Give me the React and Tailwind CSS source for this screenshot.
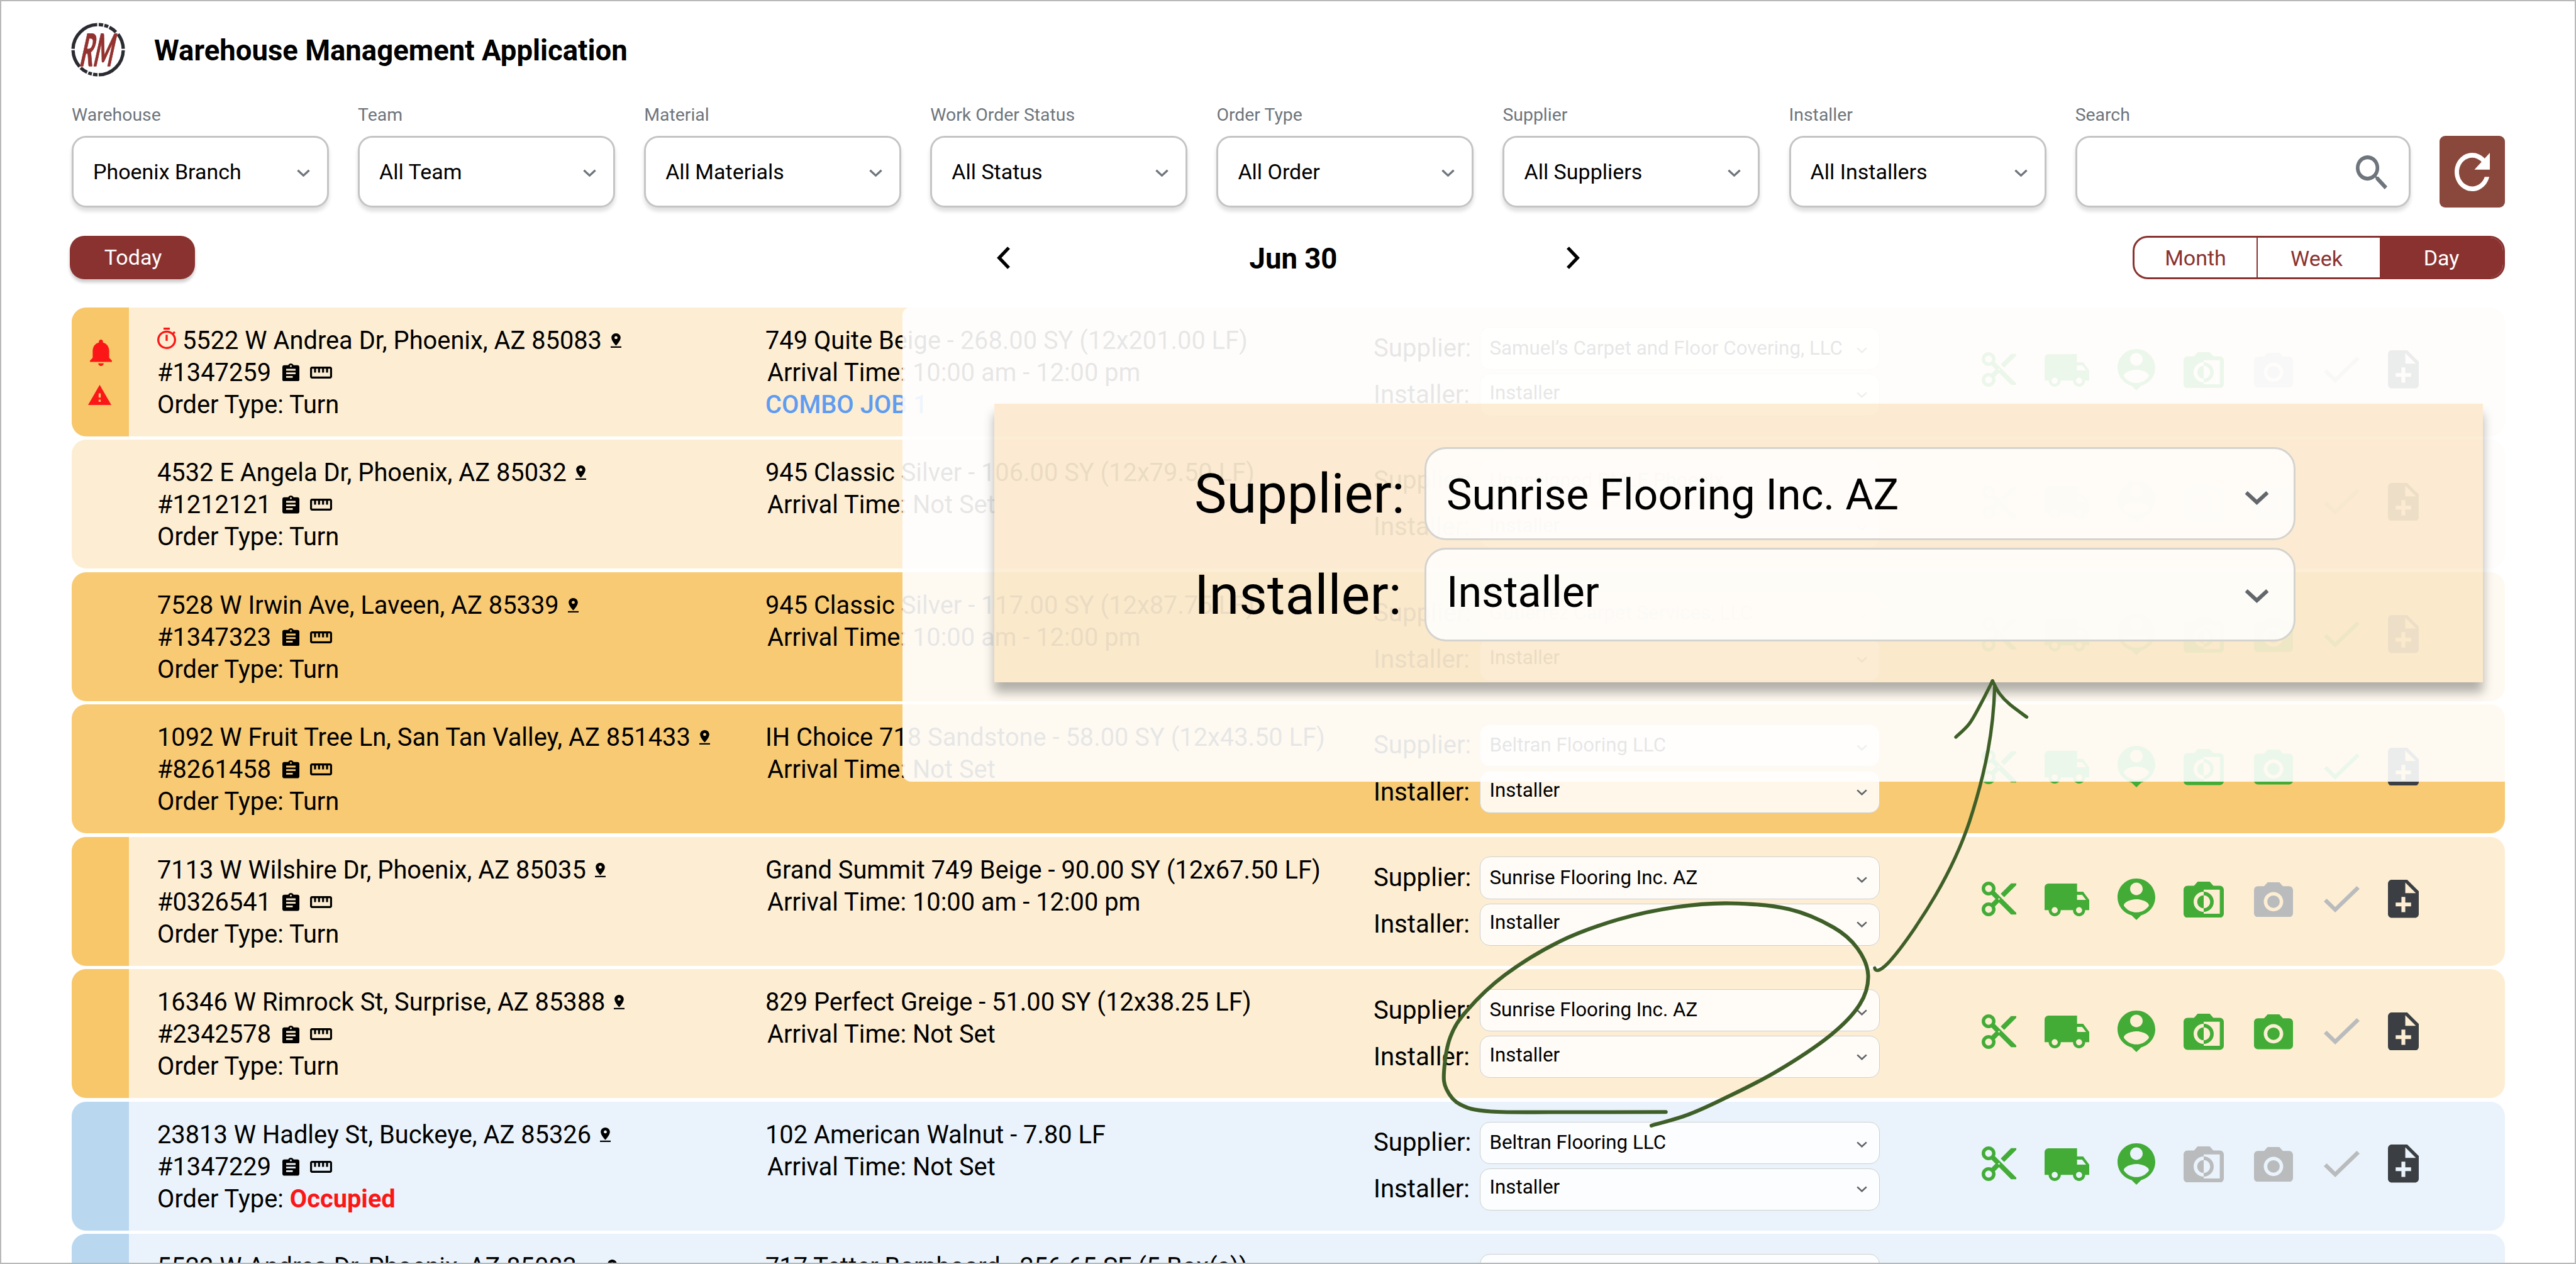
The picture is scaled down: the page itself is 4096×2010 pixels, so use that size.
import React from "react";

/* Icon shapes: [viewBox cropped to the drawing, path] */
const SHAPES = {
  cut: ["2 2 20 20", "M9.64 7.64c.23-.5.36-1.05.36-1.64 0-2.21-1.79-4-4-4S2 3.79 2 6s1.79 4 4 4c.59 0 1.14-.13 1.64-.36L10 12l-2.36 2.36C7.14 14.13 6.59 14 6 14c-2.21 0-4 1.79-4 4s1.79 4 4 4 4-1.79 4-4c0-.59-.13-1.14-.36-1.64L12 14l7 7h3v-1L9.64 7.64zM6 8c-1.1 0-2-.89-2-2s.9-2 2-2 2 .89 2 2-.9 2-2 2zm0 12c-1.1 0-2-.89-2-2s.9-2 2-2 2 .89 2 2-.9 2-2 2zm6-7.5c-.28 0-.5-.22-.5-.5s.22-.5.5-.5.5.22.5.5-.22.5-.5.5zM19 3l-6 6 2 2 7-7V3z"],
  truck: ["1 4 22 16", "M20 8h-3V4H3c-1.1 0-2 .9-2 2v11h2c0 1.66 1.34 3 3 3s3-1.34 3-3h6c0 1.66 1.34 3 3 3s3-1.34 3-3h2v-5l-3-4zM6 18.5c-.83 0-1.5-.67-1.5-1.5s.67-1.5 1.5-1.5 1.5.67 1.5 1.5-.67 1.5-1.5 1.5zm13.5-9l1.96 2.5H17V9.5h2.5zm-1.5 9c-.83 0-1.5-.67-1.5-1.5s.67-1.5 1.5-1.5 1.5.67 1.5 1.5-.67 1.5-1.5 1.5z"],
  person: ["3 2 18 20", "M12 2c-4.97 0-9 4.03-9 9 0 4.17 2.84 7.67 6.69 8.69L12 22l2.31-2.31C18.16 18.67 21 15.17 21 11c0-4.97-4.03-9-9-9zm0 2c1.66 0 3 1.34 3 3s-1.34 3-3 3-3-1.34-3-3 1.34-3 3-3zm0 14.3c-2.5 0-4.71-1.28-6-3.22.03-1.99 4-3.08 6-3.08 1.99 0 5.97 1.09 6 3.08-1.29 1.94-3.5 3.22-6 3.22z"],
  mono: ["2 3 20 18", "M20 5h-3.2L15 3H9L7.2 5H4c-1.1 0-2 .9-2 2v12c0 1.1.9 2 2 2h16c1.1 0 2-.9 2-2V7c0-1.1-.9-2-2-2zm0 14h-8v-1c-2.8 0-5-2.2-5-5s2.2-5 5-5V7h8v12zm-3-6c0-2.8-2.2-5-5-5v1.8c1.8 0 3.2 1.4 3.2 3.2s-1.4 3.2-3.2 3.2V18c2.8 0 5-2.2 5-5zm-8.2 0c0 1.8 1.4 3.2 3.2 3.2V9.8c-1.8 0-3.2 1.4-3.2 3.2z"],
  camera: ["2 2 20 18", "M9 2L7.17 4H4c-1.1 0-2 .9-2 2v12c0 1.1.9 2 2 2h16c1.1 0 2-.9 2-2V6c0-1.1-.9-2-2-2h-3.17L15 2H9zm3 15c-2.76 0-5-2.24-5-5s2.24-5 5-5 5 2.24 5 5-2.24 5-5 5zM12 8.8a3.2 3.2 0 1 0 0 6.4 3.2 3.2 0 1 0 0-6.4z"],
  check: ["3.41 5.59 17.59 13.41", "M9 16.17L4.83 12l-1.42 1.41L9 19 21 7l-1.41-1.41z"],
  note: ["4 2 16 20", "M14 2H6c-1.1 0-1.99.9-1.99 2L4 20c0 1.1.89 2 1.99 2H18c1.1 0 2-.9 2-2V8l-6-6zm2 14h-3v3h-2v-3H8v-2h3v-3h2v3h3v2zm-3-7V3.5L18.5 9H13z"],
  pin: ["5 2 14 20", "M18 8c0-3.31-2.69-6-6-6S6 4.69 6 8c0 4.5 6 11 6 11s6-6.5 6-11zm-8 0c0-1.1.9-2 2-2s2 .9 2 2-.89 2-2 2c-1.1 0-2-.9-2-2zM5 20v2h14v-2H5z"],
  clipboard: ["3 1 18 20", "M19 3h-4.18C14.4 1.84 13.3 1 12 1c-1.3 0-2.4.84-2.82 2H5c-1.1 0-2 .9-2 2v14c0 1.1.9 2 2 2h14c1.1 0 2-.9 2-2V5c0-1.1-.9-2-2-2zm-7 0c.55 0 1 .45 1 1s-.45 1-1 1-1-.45-1-1 .45-1 1-1zm2 14H7v-2h7v2zm3-4H7v-2h10v2zm0-4H7V7h10v2z"],
  ruler: ["1 6 22 12", "M21 6H3c-1.1 0-2 .9-2 2v8c0 1.1.9 2 2 2h18c1.1 0 2-.9 2-2V8c0-1.1-.9-2-2-2zm0 10H3V8h2v4h2V8h2v4h2V8h2v4h2V8h2v4h2V8h2v8z"],
  bell: ["4 2.5 16 19.5", "M12 22c1.1 0 2-.9 2-2h-4c0 1.1.89 2 2 2zm6-6v-5c0-3.07-1.64-5.64-4.5-6.32V4c0-.83-.67-1.5-1.5-1.5s-1.5.67-1.5 1.5v.68C7.63 5.36 6 7.92 6 11v5l-2 2v1h16v-1l-2-2z"],
  warning: ["1 2 22 19", "M1 21h22L12 2 1 21zm12-3h-2v-2h2v2zm0-4h-2v-4h2v4z"],
  timer: ["3 1 18 21", "M15 1H9v2h6V1zm-4 13h2V8h-2v6zm8.03-6.61l1.42-1.42c-.43-.51-.9-.99-1.41-1.41l-1.42 1.42C16.07 4.74 14.12 4 12 4c-4.97 0-9 4.03-9 9s4.02 9 9 9 9-4.03 9-9c0-2.12-.74-4.07-1.97-5.61zM12 20c-3.87 0-7-3.13-7-7s3.13-7 7-7 7 3.13 7 7-3.13 7-7 7z"],
  search: ["3 3 17.49 17.49", "M15.5 14h-.79l-.28-.27C15.41 12.59 16 11.11 16 9.5 16 5.91 13.09 3 9.5 3S3 5.91 3 9.5 5.91 16 9.5 16c1.61 0 3.09-.59 4.23-1.57l.27.28v.79l5 4.99L20.49 19l-4.99-5zm-6 0C7.01 14 5 11.99 5 9.5S7.01 5 9.5 5 14 7.01 14 9.5 11.99 14 9.5 14z"],
  refresh: ["4 4 16 16", "M17.65 6.35C16.2 4.9 14.21 4 12 4c-4.42 0-7.99 3.58-7.99 8s3.57 8 7.99 8c3.73 0 6.84-2.55 7.73-6h-2.08c-.82 2.33-3.04 4-5.65 4-3.31 0-6-2.69-6-6s2.69-6 6-6c1.66 0 3.14.69 4.22 1.78L13 11h7V4l-2.35 2.35z"],
};

function Icon({ name, className }) {
  const [box, d] = SHAPES[name];
  return (
    <svg viewBox={box} preserveAspectRatio="none" fill="currentColor" className={"shrink-0 " + className}>
      <path d={d} />
    </svg>
  );
}

function Chevron({ className }) {
  return (
    <svg viewBox="0 0 22 13" fill="none" stroke="currentColor" strokeWidth="3.4" className={"shrink-0 " + className}>
      <path d="M1.5 1.8 11 10.6 20.5 1.8" />
    </svg>
  );
}

function Logo() {
  return (
    <svg viewBox="0 0 91 91" className="w-[86px] h-[86px] shrink-0">
      <g fill="none" stroke="#2b2c31" strokeWidth="5.6">
        <path d="M44 3.3A42.2 42.2 0 0 0 3.3 44" />
        <path d="M3.3 46.5A42.2 42.2 0 0 0 14.5 74" />
        <path d="M16.2 76A42.2 42.2 0 0 0 27 83.5" />
        <path d="M29 84.5A42.2 42.2 0 0 0 35 86.4" />
        <path d="M37 87A42.2 42.2 0 0 0 44.5 87.8" />
        <path d="M46.5 87.8A42.2 42.2 0 0 0 87.8 46.5" />
        <path d="M87.8 44A42.2 42.2 0 0 0 79 19.5" />
        <path d="M75.5 16A42.2 42.2 0 0 0 64.5 7.8" />
        <path d="M62.5 6.8A42.2 42.2 0 0 0 56 4.6" />
        <path d="M54 4A42.2 42.2 0 0 0 46.5 3.3" />
      </g>
      <text
        transform="translate(14 72.5) skewX(-9)"
        fill="#93322f"
        stroke="#93322f"
        strokeWidth="1.4"
        strokeLinejoin="round"
        fontFamily="Lato, 'Open Sans', sans-serif"
        fontStyle="italic"
        fontWeight="700"
        fontSize="75"
        textLength="56"
        lengthAdjust="spacingAndGlyphs"
      >
        RM
      </text>
    </svg>
  );
}

const FILTERS = [
  ["Warehouse", "Phoenix Branch"],
  ["Team", "All Team"],
  ["Material", "All Materials"],
  ["Work Order Status", "All Status"],
  ["Order Type", "All Order"],
  ["Supplier", "All Suppliers"],
  ["Installer", "All Installers"],
];

const FIELD = "flex h-[114px] items-center justify-between rounded-[23px] border-[3px] border-[#c4c4c4] bg-white shadow-[0_6px_6px_rgba(0,0,0,0.13)]";

function Filters() {
  return (
    <div className="mt-[41px] ml-[112px] flex gap-[46.1px]">
      {FILTERS.map(([label, value]) => (
        <div key={label} className="w-[409px]">
          <div className="h-10 text-[28.4px] leading-10 text-[#6e757c]">{label}</div>
          <div className={FIELD + " mt-[13px] pl-[31px] pr-[27px]"}>
            <span className="text-[34px]">{value}</span>
            <Chevron className="mt-1 w-[21px] text-[#6e757c]" />
          </div>
        </div>
      ))}
      <div className="w-[533px]">
        <div className="h-10 text-[28.4px] leading-10 text-[#6e757c]">Search</div>
        <div className={FIELD + " mt-[13px] pr-[34px]"}>
          <span />
          <Icon name="search" className="mt-[2px] h-[54px] w-[50px] text-[#6e757c]" />
        </div>
      </div>
      <div className="mt-[53px] flex h-[114px] w-[104px] items-center justify-center rounded-[9px] bg-[#8a483c]">
        <Icon name="refresh" className="h-[61px] w-[56px] text-white" />
      </div>
    </div>
  );
}

function Toolbar() {
  return (
    <div className="mt-[45px] ml-[109px] flex h-[69px] w-[3872px] items-center text-[34px]">
      <div className="flex h-[69px] w-[199px] items-center justify-center rounded-[23px] bg-[#8a3230] text-white shadow-[0_5px_5px_rgba(0,0,0,0.2)]">
        <span className="mt-[-1px] ml-[2px]">Today</span>
      </div>
      <div className="ml-[1275px] flex w-[927px] items-center justify-between">
        <svg viewBox="0 0 21 36" className="h-[36px] w-[21px]" fill="none" stroke="black" strokeWidth="5.4">
          <path d="M19 2 3.8 18 19 34" />
        </svg>
        <span className="pl-4 pt-1 text-[45.5px] leading-none font-bold">Jun 30</span>
        <svg viewBox="0 0 21 36" className="h-[36px] w-[21px]" fill="none" stroke="black" strokeWidth="5.4">
          <path d="M2 2 17.2 18 2 34" />
        </svg>
      </div>
      <div className="ml-auto flex h-[69px] w-[592px] overflow-hidden rounded-[24px] border-[3px] border-[#8a3230] text-[#8a3230]">
        <div className="flex w-[196px] items-center justify-center border-r-2 border-[#8a3230] pt-[1px]">Month</div>
        <div className="flex w-[194px] items-center justify-center pt-[3px] pr-[7px]">Week</div>
        <div className="flex grow items-center justify-center bg-[#8a3230] pt-[1px] text-white">Day</div>
      </div>
    </div>
  );
}

const THEMES = {
  light: "bg-[#fdeed3]",
  solid: "bg-[#f8ca73]",
  blue: "bg-[#eaf3fb]",
};
const STRIPS = {
  amber: "bg-[#f7c76a]",
  sky: "bg-[#b9d8f0]",
  none: "",
};

const G = "text-[#42ac37]";
const X = "text-[#b9bbbd]";

const ROWS = [
  { theme: "light", strip: "amber", alerts: true, timer: true, address: "5522 W Andrea Dr, Phoenix, AZ 85083", number: "#1347259", material: "749 Quite Beige - 268.00 SY (12x201.00 LF)", arrival: "10:00 am - 12:00 pm", combo: "COMBO JOB 1", supplier: "Samuel’s Carpet and Floor Covering, LLC", marks: [G, X, X] },
  { theme: "light", strip: "none", address: "4532 E Angela Dr, Phoenix, AZ 85032", number: "#1212121", material: "945 Classic Silver - 106.00 SY (12x79.50 LF)", arrival: "Not Set", supplier: "Unassigned PMLF Phoenix", marks: [X, X, X] },
  { theme: "solid", strip: "none", address: "7528 W Irwin Ave, Laveen, AZ 85339", number: "#1347323", material: "945 Classic Silver - 117.00 SY (12x87.75 LF)", arrival: "10:00 am - 12:00 pm", supplier: "Gutierrez Carpet Services, LLC", marks: [G, G, G] },
  { theme: "solid", strip: "none", address: "1092 W Fruit Tree Ln, San Tan Valley, AZ 851433", number: "#8261458", material: "IH Choice 718 Sandstone - 58.00 SY (12x43.50 LF)", arrival: "Not Set", supplier: "Beltran Flooring LLC", marks: [G, G, G] },
  { theme: "light", strip: "amber", address: "7113 W Wilshire Dr, Phoenix, AZ 85035", number: "#0326541", material: "Grand Summit 749 Beige - 90.00 SY (12x67.50 LF)", arrival: "10:00 am - 12:00 pm", supplier: "Sunrise Flooring Inc. AZ", marks: [G, X, X] },
  { theme: "light", strip: "amber", address: "16346 W Rimrock St, Surprise, AZ 85388", number: "#2342578", material: "829 Perfect Greige - 51.00 SY (12x38.25 LF)", arrival: "Not Set", supplier: "Sunrise Flooring Inc. AZ", marks: [G, G, X] },
  { theme: "blue", strip: "sky", occupied: true, address: "23813 W Hadley St, Buckeye, AZ 85326", number: "#1347229", material: "102 American Walnut - 7.80 LF", arrival: "Not Set", supplier: "Beltran Flooring LLC", marks: [X, X, X] },
  { theme: "blue", strip: "sky", farPin: true, address: "5522 W Andrea Dr, Phoenix, AZ 85083", number: "#1347259", material: "717 Tetter Barnboard - 256.65 SF (5 Box(s))", arrival: "Not Set", supplier: "", marks: [X, X, X] },
];

function Picker({ label, value, second }) {
  return (
    <div className="flex h-[67px] items-center">
      <span className="w-[168.5px] text-[40.2px]">{label}</span>
      <div className="flex h-[67.4px] w-[636.5px] items-center justify-between rounded-[16px] border-[1.5px] border-[#cfcfcf] bg-white/85 pr-[19px] pl-[15px]">
        <span className={second ? "mb-[5px] text-[31.3px]" : "text-[31.3px]"}>{value}</span>
        <Chevron className={second ? "w-[17px] text-[#5f6368]" : "mt-[6px] w-[17px] text-[#5f6368]"} />
      </div>
    </div>
  );
}

function Row({ row }) {
  return (
    <div className={"flex h-[205px] w-[3869px] shrink-0 overflow-hidden rounded-[23px] " + THEMES[row.theme]}>
      <div className={"flex w-[91px] shrink-0 flex-col items-center gap-[30.5px] pt-[51px] " + STRIPS[row.strip]}>
        {row.alerts && <Icon name="bell" className="ml-[2px] h-[42px] w-[35px] text-[#fb1717]" />}
        {row.alerts && <Icon name="warning" className="mr-[2px] h-[32px] w-[37px] text-[#fb1717]" />}
      </div>
      <div className="w-[1012px] shrink-0 pt-[27px] pl-[45px] text-[39.8px] leading-[51.1px] whitespace-nowrap">
        <div className="flex items-center">
          {row.timer && <Icon name="timer" className="mr-[10px] mb-[7px] h-[34px] w-[30px] text-[#fb1717]" />}
          <span>{row.address}</span>
          <Icon name="pin" className={row.farPin ? "ml-[48px] h-[23px] w-[17px]" : "ml-[14px] h-[23px] w-[17px]"} />
        </div>
        <div className="flex items-center">
          <span className="w-[199px]">{row.number}</span>
          <Icon name="clipboard" className="h-[28.5px] w-[27px]" />
          <Icon name="ruler" className="ml-[17px] h-[19px] w-[35px]" />
        </div>
        <div>
          Order Type:{" "}
          {row.occupied ? <span className="font-bold text-[#fb1717]">Occupied</span> : <span>Turn</span>}
        </div>
      </div>
      <div className="w-[967px] shrink-0 pt-[27px] text-[39.8px] leading-[51.1px] whitespace-nowrap">
        <div>{row.material}</div>
        <div className="pl-[3px]">Arrival Time: {row.arrival}</div>
        {row.combo && <div className="font-medium text-[#5f9cf0]">{row.combo}</div>}
      </div>
      <div className="flex w-[805px] shrink-0 flex-col gap-[7.1px] pt-[32px]">
        <Picker label="Supplier:" value={row.supplier} />
        <Picker label="Installer:" value="Installer" second />
      </div>
      <div className="ml-[161.5px] flex items-center pb-[7px]">
        <Icon name="cut" className="h-[55px] w-[55px] text-[#42ac37]" />
        <Icon name="truck" className="ml-[45px] mt-[2px] h-[52px] w-[71px] text-[#42ac37]" />
        <Icon name="person" className="ml-[45px] h-[66px] w-[60px] text-[#42ac37]" />
        <Icon name="mono" className={"ml-[45.5px] mt-[2px] h-[57.5px] w-[64px] " + row.marks[0]} />
        <Icon name="camera" className={"ml-[48px] mt-[2px] h-[55.5px] w-[62px] " + row.marks[1]} />
        <Icon name="check" className={"ml-[48.5px] h-[42px] w-[57px] " + row.marks[2]} />
        <Icon name="note" className="ml-[45px] h-[60.5px] w-[49px] text-[#3b3f43]" />
      </div>
    </div>
  );
}

function ZoomField({ label, value, second }) {
  return (
    <div className="flex h-[148.5px] items-center">
      <span className="w-[366px] pt-1 text-[86.6px] leading-none">{label}</span>
      <div className="flex h-[148.5px] w-[1385px] items-center justify-between rounded-[34px] border-[3px] border-[#d4d3cf] bg-white/85 pr-[39px] pl-[32px]">
        <span className={second ? "pb-[7px] text-[68.1px] leading-none" : "pt-[5px] text-[68.1px] leading-none"}>{value}</span>
        <Chevron className={second ? "mt-[3px] w-[39px] text-[#63676c]" : "mt-[13px] w-[39px] text-[#63676c]"} />
      </div>
    </div>
  );
}

/* Smooth curve through a list of points */
function curve(points) {
  let d = "M" + points[0].join(" ");
  for (let i = 0; i < points.length - 1; i++) {
    const a = points[i - 1] || points[i];
    const b = points[i];
    const c = points[i + 1];
    const e = points[i + 2] || c;
    d += ` C${b[0] + (c[0] - a[0]) / 6} ${b[1] + (c[1] - a[1]) / 6} ${c[0] - (e[0] - b[0]) / 6} ${c[1] - (e[1] - b[1]) / 6} ${c[0]} ${c[1]}`;
  }
  return d;
}

const LOOP = [[2791, 1863.3], [2640, 1863.5], [2498, 1862.4], [2446.5, 1850.6], [2423.5, 1825], [2419.5, 1794], [2430, 1737.6], [2458, 1693], [2521, 1634], [2613, 1577.6], [2710.5, 1541], [2808, 1520], [2900, 1513.6], [2997.6, 1523.5], [3072, 1554], [3112, 1589], [3130, 1634], [3116, 1683], [3066.5, 1735], [2974.6, 1796.5], [2883, 1843.5], [2825, 1869], [2767, 1886]];
const HEAD_LEFT = [[3277, 1235], [3299.5, 1212.7], [3319, 1179], [3338.4, 1141]];
const HEAD_RIGHT = [[3338.4, 1141], [3350, 1162], [3367, 1180], [3395.6, 1201.5]];

function Annotation() {
  return (
    <svg
      viewBox="0 0 4316 2118"
      preserveAspectRatio="none"
      className="pointer-events-none absolute top-[-2px] left-[-2px] h-[2010px] w-[4096px]"
      fill="none"
      stroke="#3f5f28"
      strokeWidth="6.4"
      strokeLinecap="round"
      strokeLinejoin="round"
    >
      <path d={curve(LOOP)} />
      <path d="M3141 1622C3143 1630 3152 1626 3166 1611C3190 1584 3222 1536 3243 1500C3272 1450 3290 1406 3300 1376C3328 1290 3340 1222 3342 1151" strokeWidth="5.6" />
      <path d={curve(HEAD_LEFT)} strokeWidth="5.6" />
      <path d={curve(HEAD_RIGHT)} strokeWidth="5.6" />
    </svg>
  );
}

export default function App() {
  return (
    <div className="relative flex h-[2010px] w-[4096px] flex-col overflow-hidden border-2 border-[#b9b9b9] bg-white font-['Roboto',sans-serif] text-black">
      <header className="mt-[34px] ml-[111px] flex h-[86px] shrink-0 items-center gap-[46px]">
        <Logo />
        <h1 className="pt-[3px] text-[45.5px] leading-none font-bold">Warehouse Management Application</h1>
      </header>
      <Filters />
      <Toolbar />
      <main className="mt-[44.5px] ml-[112px] flex flex-col gap-[5.54px]">
        {ROWS.map((row) => (
          <Row key={row.number + row.material} row={row} />
        ))}
      </main>

      <div className="absolute top-[486px] left-[1433px] h-[755px] w-[2659px] rounded-[14px] bg-white/90" />

      <section className="absolute top-[640px] left-[1579px] flex h-[443px] w-[2367px] flex-col gap-[12.3px] bg-[#f5bf68]/28 pt-[68.5px] pl-[318px] shadow-[0_16px_16px_rgba(0,0,0,0.3)]">
        <ZoomField label="Supplier:" value="Sunrise Flooring Inc. AZ" />
        <ZoomField label="Installer:" value="Installer" second />
      </section>

      <Annotation />
    </div>
  );
}
